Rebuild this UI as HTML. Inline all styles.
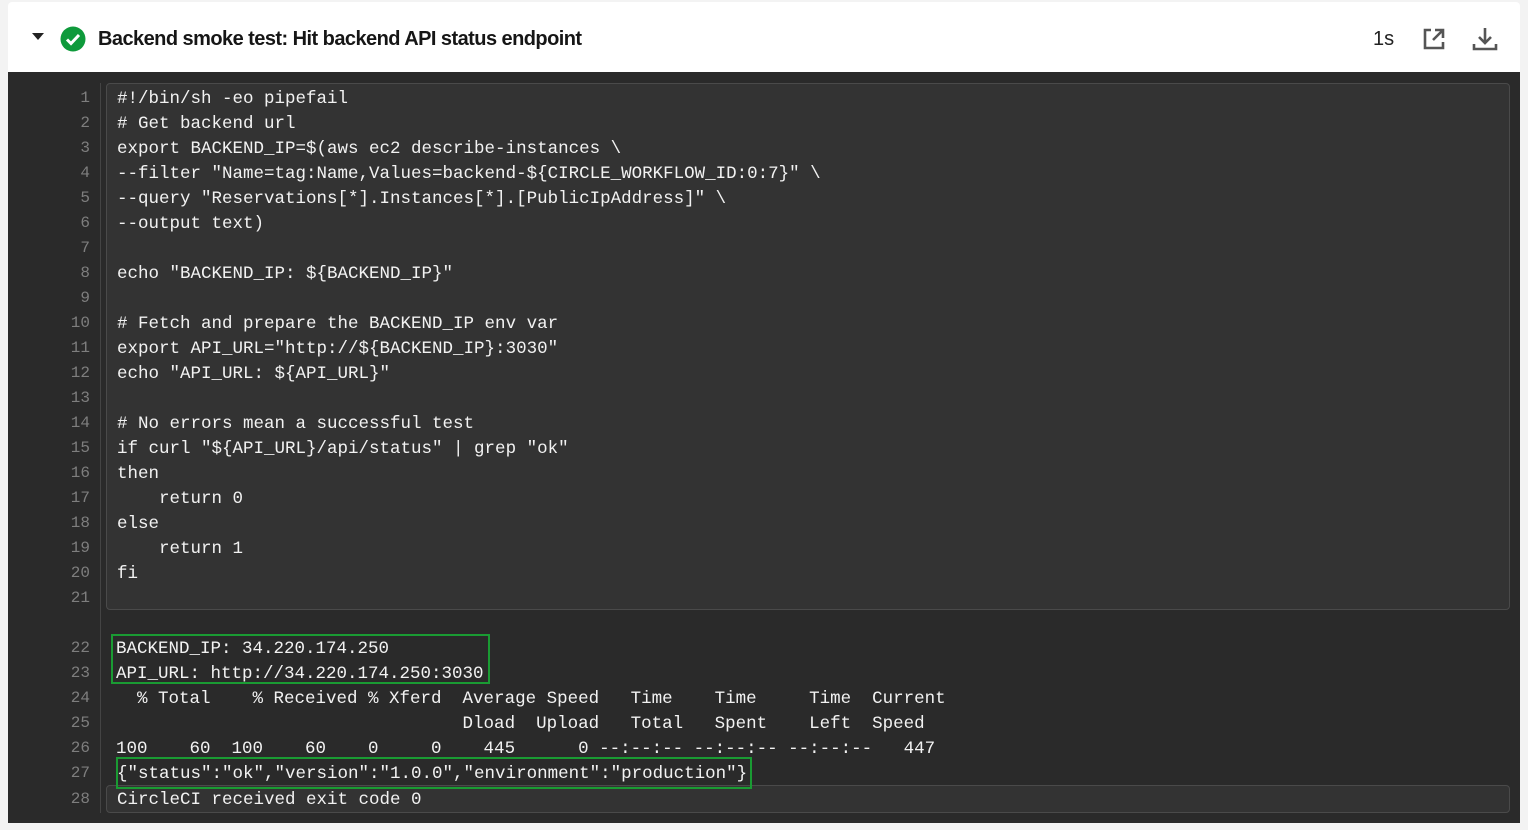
<!DOCTYPE html>
<html><head><meta charset="utf-8"><style>
html,body{margin:0;padding:0;width:1528px;height:830px;background:#f3f3f3;overflow:hidden;position:relative}
.card{position:absolute;left:8px;top:2px;width:1512px;height:70px;background:#fff;border-radius:4px 4px 0 0}
.title{position:absolute;left:90px;top:26px;font:bold 20px "Liberation Sans",sans-serif;color:#161616;letter-spacing:-0.55px}
.dark{position:absolute;left:8px;top:72px;width:1512px;height:751px;background:#2a2a2a}
.sep{position:absolute;left:100px;top:83px;width:1px;height:730px;background:#444}
.box{position:absolute;left:106px;background:#333;border:1px solid #4a4a4a;border-radius:4px;box-sizing:border-box;width:1404px}
.ln{position:absolute;left:40px;width:50px;text-align:right;font:16px "Liberation Mono",monospace;color:#7e7e7e}
.tx{position:absolute;white-space:pre;font:17.5px "Liberation Mono",monospace;color:#f2f2f2}
.g{position:absolute;border:2px solid #1a9b33;box-sizing:border-box}
</style></head><body>
<div class="card">
<svg style="position:absolute;left:24px;top:31px" width="12" height="8"><path d="M0 0h12L6 7z" fill="#222"/></svg>
<svg style="position:absolute;left:52px;top:24px" width="26" height="26"><circle cx="13" cy="13" r="12.5" fill="#0e9a3b"/><path d="M7 13.5l4 4 8-8.5" stroke="#fff" stroke-width="3" fill="none"/></svg>
<div class="title">Backend smoke test: Hit backend API status endpoint</div>
<div style="position:absolute;left:1365px;top:26px;font:20px 'Liberation Sans',sans-serif;color:#222">1s</div>
<svg style="position:absolute;left:1414px;top:25px" width="24" height="24" fill="none" stroke="#555" stroke-width="2.6"><path d="M9 3H3v18h18v-6"/><path d="M13 3h8v8M21 3l-10 10"/></svg>
<svg style="position:absolute;left:1464px;top:24px" width="26" height="26" fill="none" stroke="#555" stroke-width="2.6"><path d="M13 2v15M7 11l6 6 6-6"/><path d="M2 18v5h22v-5"/></svg>
</div>
<div class="dark"></div>
<div class="sep"></div>
<div class="box" style="top:83px;height:527px"></div>
<div class="box" style="top:785px;height:28px"></div>
<div class="g" style="left:111px;top:634px;width:379px;height:50px"></div>
<div class="g" style="left:116px;top:757px;width:636px;height:32px"></div>
<div id="c"></div>
<script>
var L=["#!/bin/sh -eo pipefail","# Get backend url","export BACKEND_IP=$(aws ec2 describe-instances \\",'--filter "Name=tag:Name,Values=backend-${CIRCLE_WORKFLOW_ID:0:7}" \\','--query "Reservations[*].Instances[*].[PublicIpAddress]" \\',"--output text)","",'echo "BACKEND_IP: ${BACKEND_IP}"',"","# Fetch and prepare the BACKEND_IP env var",'export API_URL="http://${BACKEND_IP}:3030"','echo "API_URL: ${API_URL}"',"","# No errors mean a successful test",'if curl "${API_URL}/api/status" | grep "ok"',"then","    return 0","else","    return 1","fi",""];
var h="";
for(var i=0;i<21;i++){var y=96+i*25-11;h+='<div class="ln" style="top:'+(y+4)+'px">'+(i+1)+'</div><div class="tx" style="left:117px;top:'+(y+4)+'px"></div>';}
var O=[[22,646,116,"BACKEND_IP: 34.220.174.250"],[23,671,116,"API_URL: http://34.220.174.250:3030"],[24,696,116,"  % Total    % Received % Xferd  Average Speed   Time    Time     Time  Current"],[25,721,116,"                                 Dload  Upload   Total   Spent    Left  Speed"],[26,746,116,"100    60  100    60    0     0    445      0 --:--:-- --:--:-- --:--:--   447"],[27,771,117,'{"status":"ok","version":"1.0.0","environment":"production"}'],[28,797,117,"CircleCI received exit code 0"]];
for(var j=0;j<O.length;j++){var o=O[j];h+='<div class="ln" style="top:'+(o[1]-7)+'px">'+o[0]+'</div><div class="tx" style="left:'+o[2]+'px;top:'+(o[1]-7)+'px"></div>';}
document.getElementById("c").innerHTML=h;
var t=document.querySelectorAll(".tx");
for(var k=0;k<21;k++)t[k].textContent=L[k];
for(var m=0;m<O.length;m++)t[21+m].textContent=O[m][3];
</script>
</body></html>
